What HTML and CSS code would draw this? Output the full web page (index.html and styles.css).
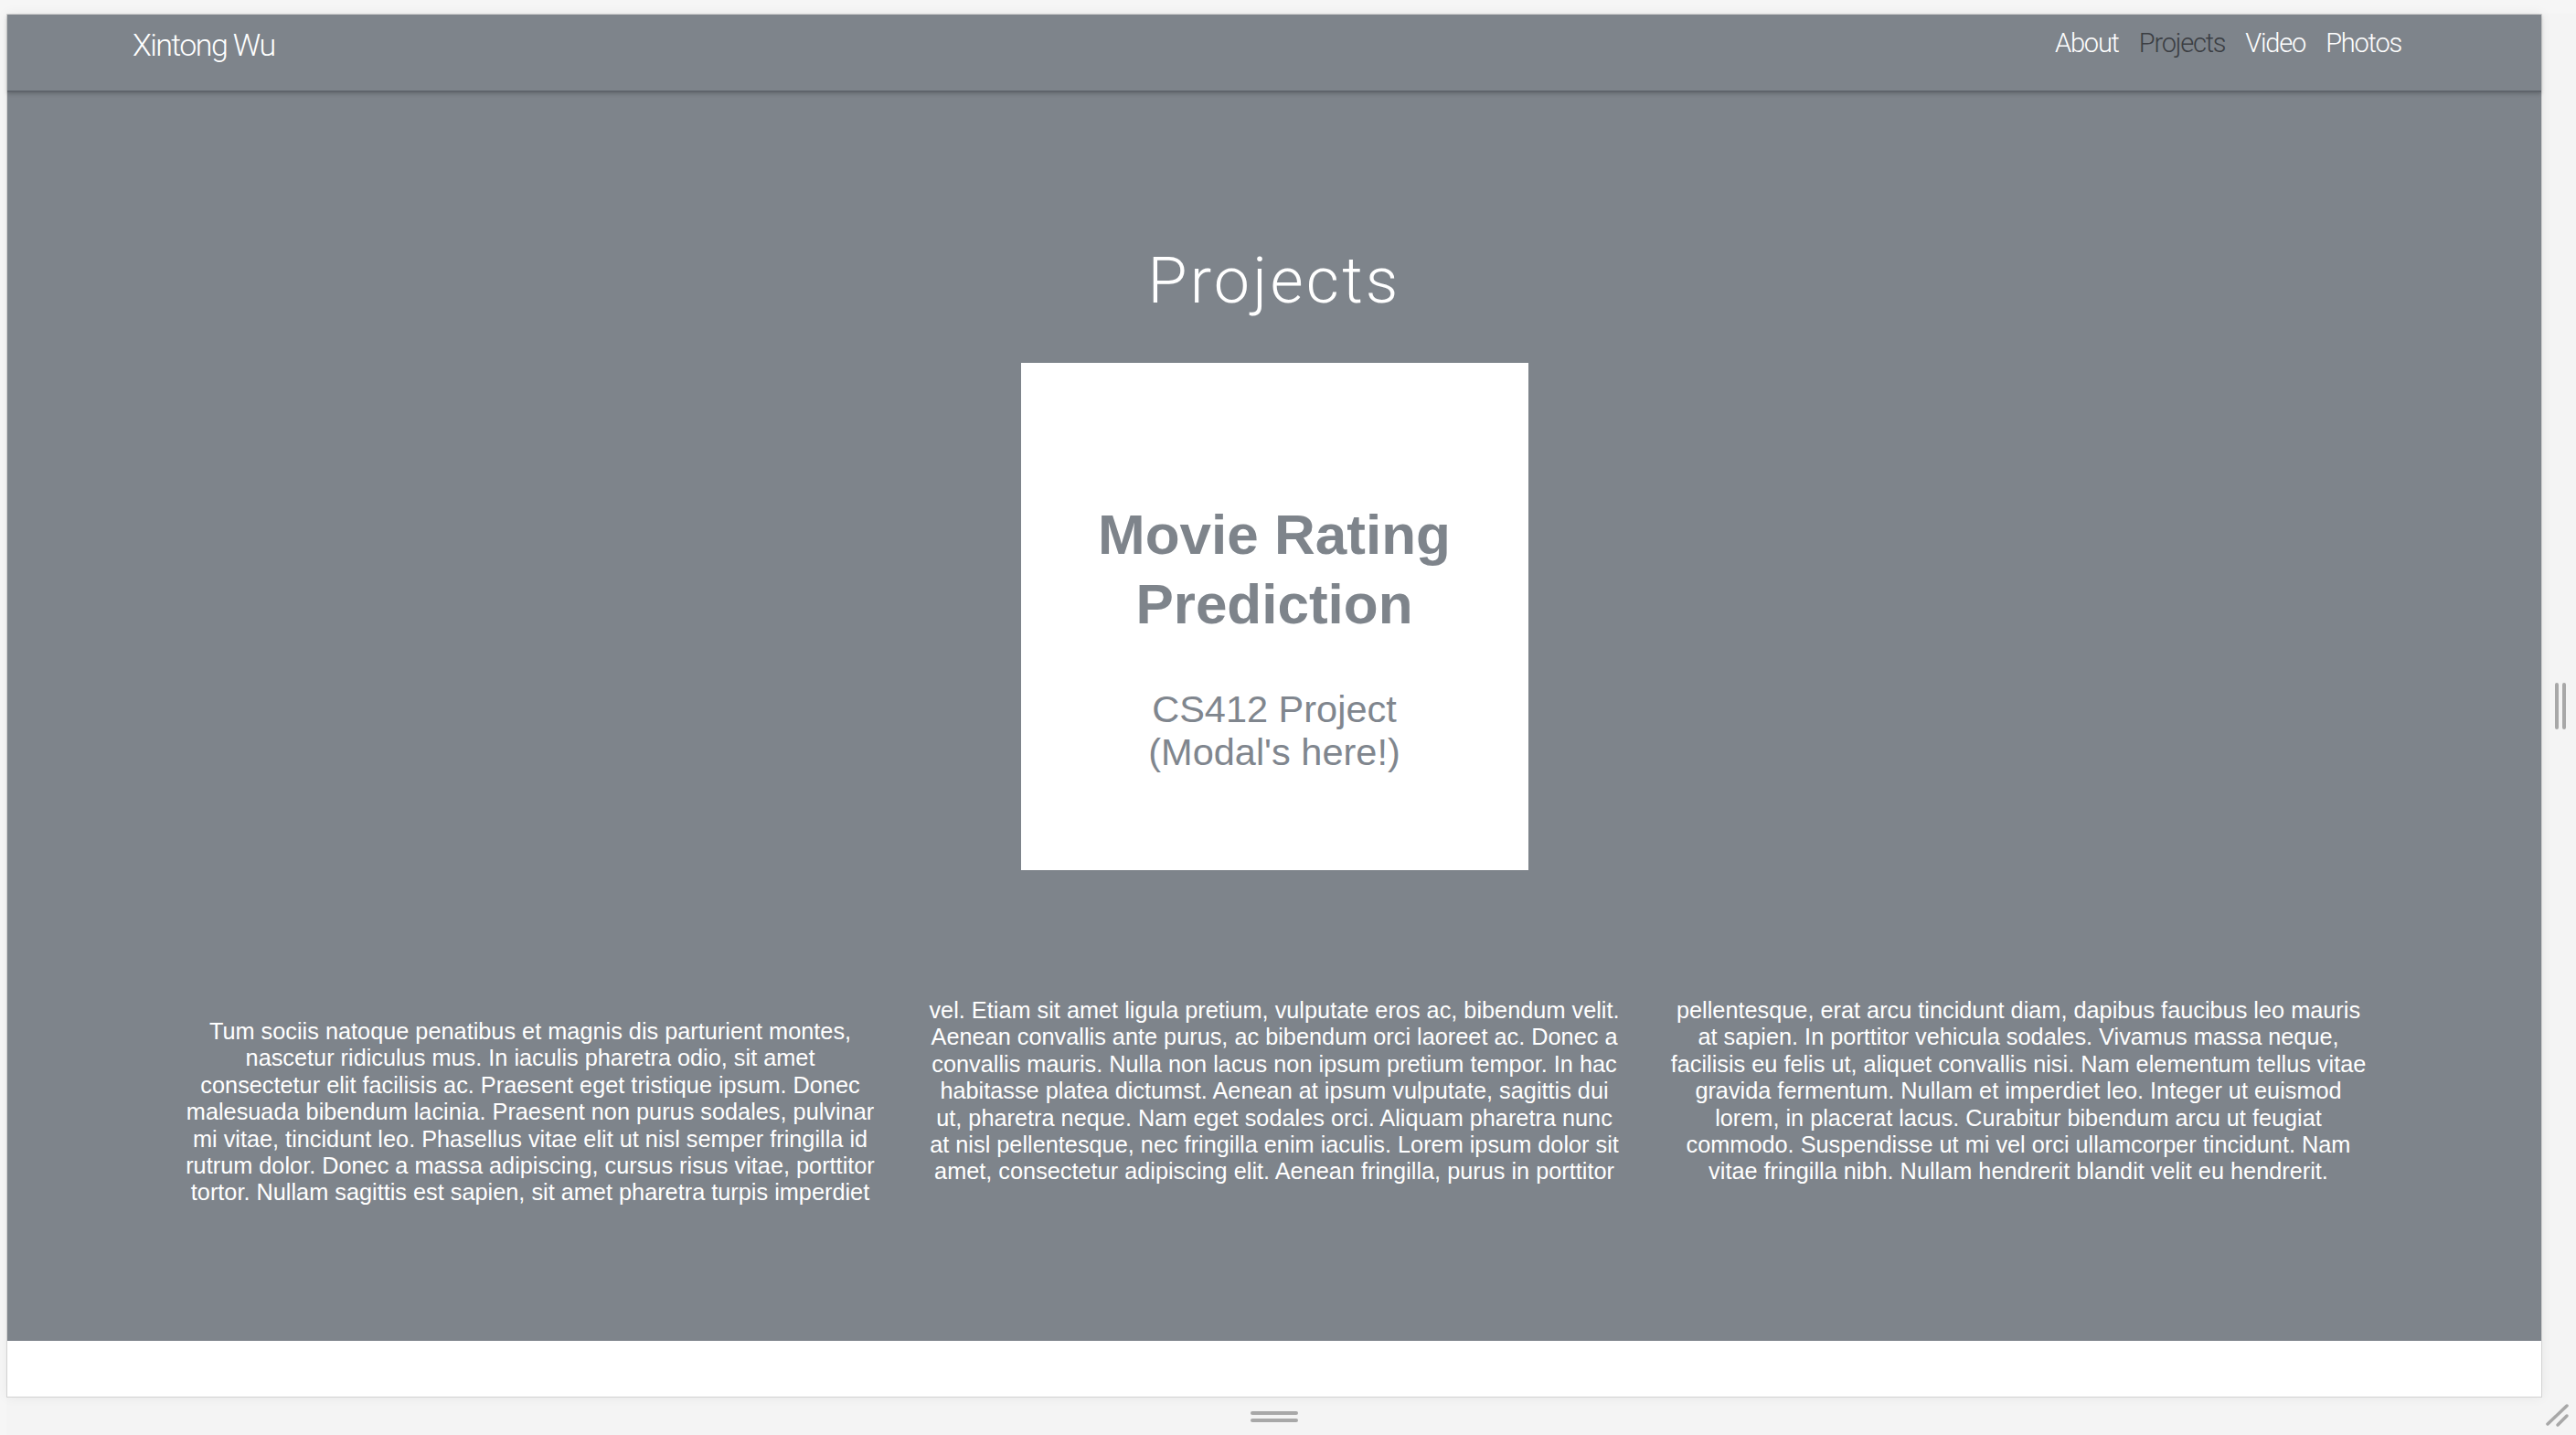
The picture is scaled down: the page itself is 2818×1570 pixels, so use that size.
FILE: index.html
```html
<!DOCTYPE html>
<html lang="en">
<head>
<meta charset="utf-8">
<title>Xintong Wu - Projects</title>
<link rel="stylesheet" href="styles.css">
</head>
<body>
<div class="stage">
  <div class="corner"></div>
  <div class="top-gutter"></div>
  <div class="top-gutter"></div>
  <div class="left-gutter"></div>
  <div class="frame">
    <header class="navbar">
      <a class="brand" href="#">Xintong Wu</a>
      <nav class="links">
        <a href="#">About</a>
        <a href="#" class="active">Projects</a>
        <a href="#">Video</a>
        <a href="#">Photos</a>
      </nav>
    </header>
    <main class="main">
      <h1 class="title">Projects</h1>
      <div class="card">
        <h2 class="card-title">Movie Rating<br>Prediction</h2>
        <p class="card-sub">CS412 Project<br>(Modal's here!)</p>
      </div>
      <div class="columns">
        <div class="col col-first">
          <span>Tum sociis natoque penatibus et magnis dis parturient montes,</span>
          <span>nascetur ridiculus mus. In iaculis pharetra odio, sit amet</span>
          <span>consectetur elit facilisis ac. Praesent eget tristique ipsum. Donec</span>
          <span>malesuada bibendum lacinia. Praesent non purus sodales, pulvinar</span>
          <span>mi vitae, tincidunt leo. Phasellus vitae elit ut nisl semper fringilla id</span>
          <span>rutrum dolor. Donec a massa adipiscing, cursus risus vitae, porttitor</span>
          <span>tortor. Nullam sagittis est sapien, sit amet pharetra turpis imperdiet</span>
        </div>
        <div class="col">
          <span>vel. Etiam sit amet ligula pretium, vulputate eros ac, bibendum velit.</span>
          <span>Aenean convallis ante purus, ac bibendum orci laoreet ac. Donec a</span>
          <span>convallis mauris. Nulla non lacus non ipsum pretium tempor. In hac</span>
          <span>habitasse platea dictumst. Aenean at ipsum vulputate, sagittis dui</span>
          <span>ut, pharetra neque. Nam eget sodales orci. Aliquam pharetra nunc</span>
          <span>at nisl pellentesque, nec fringilla enim iaculis. Lorem ipsum dolor sit</span>
          <span>amet, consectetur adipiscing elit. Aenean fringilla, purus in porttitor</span>
        </div>
        <div class="col">
          <span>pellentesque, erat arcu tincidunt diam, dapibus faucibus leo mauris</span>
          <span>at sapien. In porttitor vehicula sodales. Vivamus massa neque,</span>
          <span>facilisis eu felis ut, aliquet convallis nisi. Nam elementum tellus vitae</span>
          <span>gravida fermentum. Nullam et imperdiet leo. Integer ut euismod</span>
          <span>lorem, in placerat lacus. Curabitur bibendum arcu ut feugiat</span>
          <span>commodo. Suspendisse ut mi vel orci ullamcorper tincidunt. Nam</span>
          <span>vitae fringilla nibh. Nullam hendrerit blandit velit eu hendrerit.</span>
        </div>
      </div>
    </main>
    <footer class="footer"></footer>
  </div>
  <div class="right-gutter">
    <div class="vhandle"><i></i><i></i></div>
  </div>
  <div class="left-gutter"></div>
  <div class="bottom-gutter">
    <div class="hhandle"><i></i><i></i></div>
  </div>
  <div class="resize">
    <svg width="30" height="30" viewBox="0 0 30 30">
      <line x1="4" y1="25" x2="25" y2="5" stroke="#a8a8a8" stroke-width="3.5" stroke-linecap="round"/>
      <line x1="15" y1="26" x2="25" y2="16" stroke="#a8a8a8" stroke-width="3.5" stroke-linecap="round"/>
    </svg>
  </div>
</div>
</body>
</html>
```

FILE: styles.css
```css
* { box-sizing: border-box; }

html, body {
  margin: 0;
  padding: 0;
  background: #f5f5f5;
  overflow: hidden;
}

.stage {
  display: grid;
  grid-template-columns: 7px 2774px 37px;
  grid-template-rows: 15px 1514px 41px;
  width: 2818px;
  height: 1570px;
  background: #f5f5f5;
}

.corner, .top-gutter, .left-gutter { background: #f6f6f6; }

.frame {
  border: 1px solid #d2d2d2;
  background: #ffffff;
  display: flex;
  flex-direction: column;
  box-shadow: 0 0 12px rgba(0, 0, 0, 0.06);
  position: relative;
  z-index: 1;
}

.navbar {
  height: 85px;
  background: #7e848b;
  border-bottom: 2px solid #5f646b;
  box-shadow: 0 2px 4px rgba(0, 0, 0, 0.18);
  display: flex;
  justify-content: space-between;
  align-items: flex-start;
  padding: 0 153px 0 137px;
  position: relative;
  z-index: 2;
}

.brand {
  font-family: "Helvetica Neue", Roboto, "Liberation Sans", sans-serif;
  font-weight: 300;
  font-size: 34px;
  line-height: 40px;
  letter-spacing: -1.6px;
  color: #ffffff;
  text-decoration: none;
  margin-top: 13px;
}

.links {
  display: flex;
  gap: 22px;
  margin-top: 14px;
}

.links a {
  font-family: "Helvetica Neue", Roboto, "Liberation Sans", sans-serif;
  font-weight: 300;
  font-size: 29px;
  line-height: 34px;
  letter-spacing: -1.2px;
  color: #ffffff;
  text-decoration: none;
}

.links a.active { color: #3b3e43; }

.main {
  flex: 1;
  background: #7e848b;
  display: flex;
  flex-direction: column;
  align-items: center;
}

.title {
  margin: 171px 0 0;
  font-family: "Helvetica Neue", Roboto, "Liberation Sans", sans-serif;
  font-weight: 300;
  font-size: 70px;
  line-height: 70px;
  letter-spacing: 3.2px;
  color: #ffffff;
}

.card {
  margin-top: 55px;
  width: 555px;
  height: 555px;
  background: #ffffff;
  padding-top: 150px;
  text-align: center;
  color: #7e848b;
  font-family: "Liberation Sans", Arial, sans-serif;
}

.card-title {
  margin: 0;
  font-size: 62px;
  line-height: 76px;
  font-weight: 700;
}

.card-sub {
  margin: 53px 0 0;
  font-size: 41.5px;
  line-height: 47px;
  font-weight: 400;
  color: #80868e;
}

.columns {
  margin-top: 139px;
  width: 2442px;
  display: grid;
  grid-template-columns: repeat(3, 1fr);
  align-items: start;
}

.col {
  display: flex;
  flex-direction: column;
  align-items: center;
  font-family: "Liberation Sans", Arial, sans-serif;
  font-size: 25.3px;
  line-height: 29.4px;
  color: #ffffff;
  letter-spacing: 0;
}

.col span { white-space: nowrap; }

.col-first { padding-top: 23px; }

.footer {
  height: 61px;
  background: #ffffff;
}

.right-gutter {
  display: flex;
  align-items: center;
  justify-content: center;
  background: #f4f4f4;
  padding-left: 2px;
}

.vhandle {
  display: flex;
  gap: 4px;
}

.vhandle i {
  display: block;
  width: 4px;
  height: 51px;
  border-radius: 2px;
  background: #a8a8a8;
}

.bottom-gutter {
  display: flex;
  align-items: center;
  justify-content: center;
  background: #f4f4f4;
  padding-top: 1px;
}

.hhandle {
  display: flex;
  flex-direction: column;
  gap: 4px;
}

.hhandle i {
  display: block;
  width: 52px;
  height: 4px;
  border-radius: 2px;
  background: #a8a8a8;
}

.resize {
  background: #f4f4f4;
  display: flex;
  align-items: flex-start;
  justify-content: flex-start;
  padding: 4px 0 0 2px;
}
```
